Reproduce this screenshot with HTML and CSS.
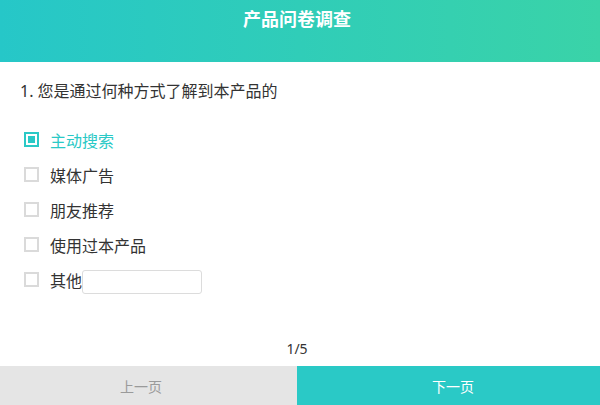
FILE: index.html
```html
<!DOCTYPE html>
<html lang="zh-CN">
<head>
<meta charset="utf-8">
<title>产品问卷调查</title>
<link rel="stylesheet" href="styles.css">
</head>
<body>
<div class="page">
  <header class="header"><h1 class="title">产品问卷调查</h1></header>
  <main class="main">
    <p class="question">1. 您是通过何种方式了解到本产品的</p>
    <ul class="options">
      <li class="option checked"><span class="box"></span><span class="label">主动搜索</span></li>
      <li class="option"><span class="box"></span><span class="label">媒体广告</span></li>
      <li class="option"><span class="box"></span><span class="label">朋友推荐</span></li>
      <li class="option"><span class="box"></span><span class="label">使用过本产品</span></li>
      <li class="option"><span class="box"></span><span class="label">其他</span><span class="other-input"></span></li>
    </ul>
  </main>
  <div class="pager">1/5</div>
  <footer class="footer">
    <div class="btn prev">上一页</div>
    <div class="btn next">下一页</div>
  </footer>
</div>
</body>
</html>
```
FILE: styles.css
```css
* { box-sizing: border-box; }
html, body { margin: 0; padding: 0; }
body {
  font-family: "Noto Sans", "Noto Sans CJK SC", sans-serif;
  color: #333;
  background: #fff;
}
.page {
  width: 600px;
  height: 405px;
  display: flex;
  flex-direction: column;
}
.header {
  height: 62px;
  background: linear-gradient(90deg, #26c7c8 0%, #3ad3a8 100%);
  padding: 7px 6px 0 0;
}
.title {
  margin: 0;
  text-align: center;
  color: #fff;
  font-size: 18px;
  line-height: 24px;
  font-weight: bold;
}
.main {
  flex: 1;
  padding: 18px 20px 0 20px;
}
.question {
  margin: 0;
  font-size: 16px;
  line-height: 22px;
  color: #333;
}
.options {
  list-style: none;
  margin: 20px 0 0 0;
  padding: 0 0 0 4px;
}
.option {
  display: flex;
  align-items: center;
  height: 35px;
  font-size: 16px;
  color: #333;
}
.box {
  width: 15px;
  height: 15px;
  border: 2px solid #dadada;
  margin-right: 11px;
  flex: none;
}
.checked { color: #2ac9c6; }
.checked .box {
  border-color: #2ac9c6;
  padding: 2px;
}
.checked .box::after {
  content: "";
  display: block;
  width: 100%;
  height: 100%;
  background: #2ac9c6;
}
.other-input {
  display: inline-block;
  width: 120px;
  height: 24px;
  border: 1px solid #dcdcdc;
  border-radius: 3px;
  margin-top: 4px;
}
.pager {
  text-align: center;
  font-size: 14px;
  line-height: 20px;
  color: #333;
  padding: 0 6px 7px 0;
}
.footer {
  display: flex;
  height: 39px;
}
.btn {
  display: flex;
  align-items: center;
  justify-content: center;
  font-size: 14px;
}
.prev {
  width: 297px;
  background: #e5e5e5;
  color: #9a9a9a;
  padding-right: 15px;
}
.next {
  flex: 1;
  background: #2ac9c6;
  color: #fff;
  padding-left: 9px;
}
```
